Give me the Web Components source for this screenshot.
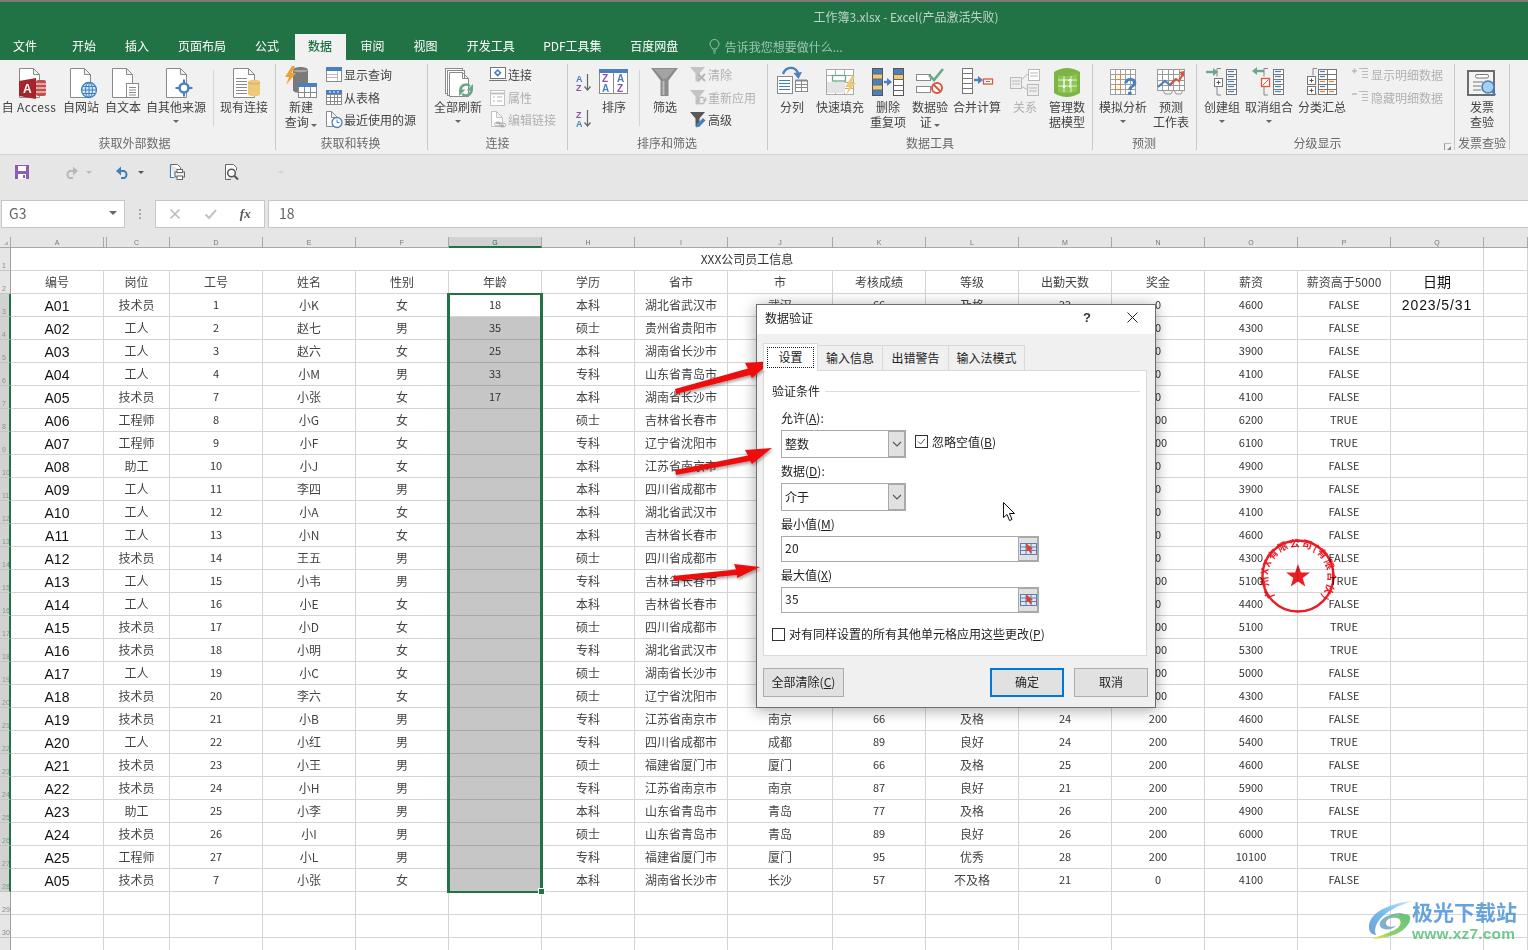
<!DOCTYPE html>
<html lang="zh-CN"><head><meta charset="utf-8"><title>工作簿3.xlsx - Excel</title>
<style>
html,body{margin:0;padding:0;background:#fff}
body{font:12px "Noto Sans CJK SC","Liberation Sans",sans-serif;color:#333;width:1528px;height:950px;overflow:hidden}
</style></head><body>
<x-app>
  <x-titlebar slot="chrome"></x-titlebar>
  <x-ribbon slot="chrome">
    <rb-group w="276" label="获取外部数据" lp="6">
      <rb-big w="58" icon="access" ls=".4">自 Access</rb-big><rb-big w="46" icon="web">自网站</rb-big><rb-big w="38" icon="text">自文本</rb-big><rb-big w="68" icon="other" caret="1">自其他来源</rb-big><rb-sep w="6"></rb-sep><rb-big w="56" icon="conn">现有连接</rb-big>
    </rb-group>
    <rb-group w="152" label="获取和转换" lp="2">
      <rb-big w="50" icon="query" inlinecaret="1" l2="查询">新建</rb-big>
      <rb-col ml="-1"><rb-small icon="showq">显示查询</rb-small><rb-small icon="fromt">从表格</rb-small><rb-small icon="recent">最近使用的源</rb-small></rb-col>
    </rb-group>
    <rb-group w="140" label="连接">
      <rb-big w="60" icon="refresh" caret="1">全部刷新</rb-big>
      <rb-col ml="1"><rb-small icon="link">连接</rb-small><rb-small icon="prop" off="1">属性</rb-small><rb-small icon="edit" off="1">编辑链接</rb-small></rb-col>
    </rb-group>
    <rb-group w="200" label="排序和筛选" lp="1">
      <rb-col w="28"><rb-tall icon="azs"></rb-tall><rb-tall icon="zas"></rb-tall></rb-col>
      <rb-big w="36" icon="sort">排序</rb-big><rb-sep w="14"></rb-sep><rb-big w="38" icon="filter">筛选</rb-big>
      <rb-col ml="5"><rb-small icon="clear" off="1">清除</rb-small><rb-small icon="reapply" off="1">重新应用</rb-small><rb-small icon="adv">高级</rb-small></rb-col>
    </rb-group>
    <rb-group w="325" label="数据工具">
      <rb-big w="48" icon="split">分列</rb-big><rb-big w="48" icon="flash">快速填充</rb-big><rb-big w="48" icon="dedup" l2="重复项">删除</rb-big><rb-big w="36" icon="valid" inlinecaret="1" l2="证">数据验</rb-big><rb-big w="58" icon="merge">合并计算</rb-big><rb-big w="38" icon="rel" off="1">关系</rb-big><rb-big w="46" icon="model" l2="据模型">管理数</rb-big>
    </rb-group>
    <rb-group w="104" label="预测" pad="4" lp="1">
      <rb-big w="52" icon="whatif" caret="1">模拟分析</rb-big><rb-big w="44" icon="forecast" l2="工作表">预测</rb-big>
    </rb-group>
    <rb-group w="258" label="分级显示" launcher="1" lp="16">
      <rb-big w="50" icon="group" caret="1">创建组</rb-big><rb-big w="44" icon="ungroup" caret="1">取消组合</rb-big><rb-big w="62" icon="subtotal">分类汇总</rb-big>
      <rb-col ml="-1"><rb-small icon="showd" off="1">显示明细数据</rb-small><rb-small icon="hided" off="1">隐藏明细数据</rb-small></rb-col>
    </rb-group>
    <rb-group w="55" label="发票查验">
      <rb-big w="54" icon="invoice" l2="查验">发票</rb-big>
    </rb-group>
  </x-ribbon>
  <x-qat slot="chrome"></x-qat>
  <x-formula slot="chrome"></x-formula>
  <x-sheet slot="chrome"></x-sheet>
  <x-dialog slot="over"></x-dialog>
  <x-annotations slot="over"></x-annotations>
  <x-stamp slot="over"></x-stamp>
  <x-watermark slot="over"></x-watermark>
</x-app>
<script>
const CJK='"Noto Sans CJK SC","Liberation Sans",sans-serif';
const G='#8a8a8a',B='#4a80bd',Y='#efc97a',O='#e0863a',R='#d9573a',GR='#6aa88c';
const svg=(w,h,s)=>`<svg xmlns="http://www.w3.org/2000/svg" width="${w}" height="${h}" viewBox="0 0 ${w} ${h}" style="display:block;overflow:visible">${s}</svg>`;
const pg=(x,y,w,h,s=G,f='#fff')=>`<path d="M${x+.5} ${y+.5}h${w-6}l6 6v${h-6}h-${w}z M${x+w-5.5} ${y+.5}v6h6" fill="${f}" stroke="${s}"/>`;
const hl=(x,y,w,n,st,c=G,sw=1)=>{let o='';for(let i=0;i<n;i++)o+=`<path d="M${x} ${y+i*st+.5}h${w}" stroke="${c}" stroke-width="${sw}"/>`;return o};
const grid=(x,y,w,h,c,r,s=G,f='#fff')=>{let o=`<rect x="${x+.5}" y="${y+.5}" width="${w}" height="${h}" fill="${f}" stroke="${s}"/>`;for(let i=1;i<c;i++){const a=Math.round(x+i*w/c)+.5;o+=`<path d="M${a} ${y}v${h}" stroke="${s}"/>`}for(let i=1;i<r;i++){const a=Math.round(y+i*h/r)+.5;o+=`<path d="M${x} ${a}h${w}" stroke="${s}"/>`}return o};
const arrow=(x,y,w,c,dir=1)=>dir>0?`<path d="M${x} ${y}h${w-4}" stroke="${c}" stroke-width="2.4"/><path d="M${x+w-5} ${y-4}l5 4l-5 4z" fill="${c}"/>`:`<path d="M${x+4} ${y}h${w-4}" stroke="${c}" stroke-width="2.4"/><path d="M${x+5} ${y-4}l-5 4l5 4z" fill="${c}"/>`;
const refresh=(cx,cy,r,c)=>`<path d="M${cx-r} ${cy}a${r} ${r} 0 0 1 ${r*1.7} ${-r*.7}" fill="none" stroke="${c}" stroke-width="2.6"/><path d="M${cx+r} ${cy}a${r} ${r} 0 0 1 ${-r*1.7} ${r*.7}" fill="none" stroke="${c}" stroke-width="2.6"/><path d="M${cx+r+1.5} ${cy-r-.5}v${r+1}h${-r-1}z M${cx-r-1.5} ${cy+r+.5}v${-r-1}h${r+1}z" fill="${c}"/>`;
const bolt=(x,y,c)=>`<path d="M${x+7} ${y}L${x} ${y+11}h4L${x+1} ${y+19}L${x+11} ${y+7}h-4.500L${x+10} ${y}z" fill="${c}"/>`;
const funnel=(c,x=0,y=0)=>`<path d="M${x+1} ${y+1}h15l-5.500 6.500v8h-4v-8z" fill="${c}"/>`;
const txt=(x,y,s,c,t,w=400,fam='Liberation Sans')=>`<text x="${x}" y="${y}" font-size="${s}" font-weight="${w}" fill="${c}" font-family="${fam}">${t}</text>`;
const ICONS={
 access:svg(36,33,pg(8,2,20,29)+`<rect x="25" y="14" width="10" height="16" rx="2" fill="#c0504d"/><path d="M25 18h10M25 22h10M25 26h10" stroke="#fff"/><path d="M8 15l17-3v21l-17-3z" fill="#a4262c"/>`+txt(12,27,12,'#fff','A',700)),
 web:svg(36,33,pg(7,2,20,29)+`<circle cx="26" cy="24" r="7.500" fill="#d7e7f6" stroke="#3f7fc1" stroke-width="1.300"/><ellipse cx="26" cy="24" rx="3.500" ry="7.500" fill="none" stroke="#3f7fc1"/><path d="M18.500 24h15M19.500 20.500h13M19.500 27.500h13M26 16.500v15" stroke="#3f7fc1"/>`),
 text:svg(36,33,pg(7,2,20,29)+`<rect x="21.500" y="17.500" width="12" height="14" fill="#fff" stroke="${G}"/>`+hl(24,21,7,4,2.500)),
 other:svg(36,33,pg(8,2,20,29)+`<circle cx="26" cy="22" r="4.500" fill="#fff" stroke="${B}" stroke-width="2.600"/><path d="M26 13.500v4M26 26.500v4M17.500 22h4M30.500 22h4" stroke="${B}" stroke-width="2"/>`),
 conn:svg(36,33,pg(7,2,21,29)+hl(10,12,11,6,3)+`<path d="M22 16c0-3 12-3 12 0v12c0 3-12 3-12 0z" fill="${Y}"/><path d="M22 16c0 2.500 12 2.500 12 0" fill="none" stroke="#d9ad58"/>`),
 query:svg(36,33,`<path d="M10 4c0-4 15-4 15 0v20c0 4-15 4-15 0z" fill="#7a7a7a"/><path d="M10 4c0 3 15 3 15 0" fill="#a8a8a8"/>`+bolt(2,0,'#f0a030')+`<rect x="15.500" y="17.500" width="18" height="14" fill="#fff" stroke="${G}"/><rect x="15" y="17" width="19" height="4" fill="${B}"/><path d="M21.500 21v10M27.500 21v10M16 26.500h18" stroke="${G}"/>`),
 showq:svg(19,17,`<rect x="1.500" y="1.500" width="15" height="14" fill="#fff" stroke="${G}"/><rect x="1" y="1" width="16" height="4" fill="${B}"/><path d="M12.500 5v10M2 8.500h10M2 11.500h10" stroke="#bbb"/>`),
 fromt:svg(19,17,grid(1,1,15,14,4,4)+`<rect x="1" y="1" width="16" height="4" fill="${B}"/><path d="M5 2v2M9 2v2M13 2v2" stroke="#fff"/>`),
 recent:svg(19,17,pg(1,0,11,15)+`<circle cx="12" cy="11.500" r="5" fill="#fff" stroke="${B}" stroke-width="1.300"/><path d="M12 8.500v3h2.500" fill="none" stroke="${B}"/>`),
 refresh:svg(36,33,`<rect x="5.500" y="2.500" width="17" height="25" fill="#fff" stroke="${G}"/><rect x="7.500" y="4.500" width="17" height="25" fill="#fff" stroke="${G}"/>`+pg(9,6,19,24)+refresh(26,24,5.500,GR)),
 link:svg(19,17,`<rect x="1.500" y="1.500" width="15" height="11" fill="#fff" stroke="#777"/><path d="M0 14.500h18" stroke="#777"/><rect x="6" y="4" width="5.500" height="5.500" transform="rotate(45 8.700 6.700)" fill="${B}"/><circle cx="8.700" cy="6.700" r="1.300" fill="#fff"/>`),
 prop:svg(19,17,`<rect x="1.500" y="1.500" width="14" height="15" fill="#fff" stroke="#c2c2c2"/><path d="M1 4.500h15" stroke="#c2c2c2" stroke-width="2"/><path d="M4 8h2M8 8h5M4 12h2M8 12h5" stroke="#b0b0b0"/>`),
 edit:svg(19,17,pg(2,0,11,15,'#c2c2c2')+`<path d="M7 12h4M12 15h3" stroke="#b0b0b0" stroke-width="2"/><ellipse cx="9" cy="13" rx="3.500" ry="2" fill="none" stroke="#b0b0b0"/><ellipse cx="13.500" cy="14" rx="3.500" ry="2" fill="none" stroke="#b0b0b0"/>`),
 azs:svg(18,21,txt(1,10,9,B,'A',700)+txt(1,19,9,'#8a56ad','Z',700)+`<path d="M12.500 2v16M9.500 14.500l3 3.500l3-3.500" fill="none" stroke="#666" stroke-width="1.200"/>`),
 zas:svg(18,21,txt(1,10,9,'#8a56ad','Z',700)+txt(1,19,9,B,'A',700)+`<path d="M12.500 2v16M9.500 14.500l3 3.500l3-3.500" fill="none" stroke="#666" stroke-width="1.200"/>`),
 sort:svg(36,33,`<rect x="3.500" y="3.500" width="28" height="24" fill="#fff" stroke="${G}"/><rect x="3" y="3" width="29" height="4" fill="${B}"/><path d="M17.500 7v20" stroke="${G}"/>`+txt(6,16,10,'#8a56ad','Z',700)+txt(6,26,10,B,'A',700)+txt(21,16,10,B,'A',700)+txt(21,26,10,'#8a56ad','Z',700)),
 filter:svg(36,33,`<path d="M4 2h27L21.500 14.500V30h-8V14.500z" fill="#8c8c8c"/><path d="M7 3h21l-9 10H16z" fill="#a3a3a3"/><path d="M15.500 15v14h2V15z" fill="#bdbdbd"/>`),
 clear:svg(19,17,funnel('#c4c4c4')+`<path d="M9 8l7 7M16 8l-7 7" stroke="#b4b4b4" stroke-width="1.800"/>`),
 reapply:svg(19,17,funnel('#c4c4c4')+refresh(12.500,11.500,3.300,'#bdbdbd').replace(/2\.6/g,'1.500')),
 adv:svg(19,17,funnel('#585858')+`<path d="M7 16.500l1-3.500l6-6l2.500 2.500l-6 6z" fill="#4a80bd"/>`),
 split:svg(36,33,`<rect x="3.500" y="10.500" width="15" height="17" fill="#fff" stroke="${G}"/>`+hl(5,14,11,4,3,'#3f7fc1')+grid(21,14,12,11,2,3)+`<path d="M21 14.500h12" stroke="${G}" stroke-width="2"/><path d="M9 8C12 0 21 0 24 7" fill="none" stroke="${B}" stroke-width="2.400"/><path d="M19.500 7l8.500-1l-3.500 7z" fill="${B}"/>`),
 flash:svg(36,33,grid(4,3,27,25,3,4,'#a9a9a9')+`<rect x="10.500" y="9.500" width="13" height="5.500" fill="#fff" stroke="${GR}" stroke-width="1.300"/><rect x="5" y="16" width="18" height="11" fill="#e4e4e4"/>`+bolt(23,10,Y)),
 dedup:svg(36,33,`<rect x="2.500" y="2.500" width="10" height="27" fill="${B}" stroke="#555"/><path d="M3 8h9v5h-9zM3 19h9v5h-9z" fill="${Y}"/><path d="M2 8h11M2 13h11M2 19h11M2 24h11" stroke="#666"/>`+arrow(14,16,8,B)+`<rect x="23.500" y="2.500" width="10" height="27" fill="#fff" stroke="#555"/><path d="M24 3h9v5h-9z" fill="${B}"/><path d="M24 8h9v5h-9z" fill="${Y}"/><path d="M23 8.500h11M23 13.500h11M23 19.500h11M23 24.500h11" stroke="#666"/>`),
 valid:svg(36,33,`<rect x="4.500" y="8.500" width="14" height="6" fill="#fff" stroke="${G}"/><rect x="4.500" y="20.500" width="14" height="6" fill="#fff" stroke="${G}"/><path d="M17 9l5 5L31 3" fill="none" stroke="${GR}" stroke-width="2.600"/><circle cx="25" cy="22" r="5" fill="#fff" stroke="${R}" stroke-width="2"/><path d="M21.500 18.500l7 7" stroke="${R}" stroke-width="2"/>`),
 merge:svg(36,33,grid(3,2,10,25,1,5,'#777')+arrow(15,14,9,B)+`<rect x="24.500" y="13" width="9" height="5" fill="#fff" stroke="${R}" stroke-width="1.300"/><path d="M27 15.500h4" stroke="${R}"/>`),
 rel:svg(36,33,`<rect x="3.500" y="11.500" width="11" height="11" fill="#eee" stroke="#b9b9b9"/><rect x="21.500" y="3.500" width="11" height="11" fill="#fff" stroke="#b9b9b9"/><rect x="20.500" y="18.500" width="11" height="11" fill="#eee" stroke="#b9b9b9"/><path d="M14 14l8-7M14 20l7 4M5 15h8M5 18h8M23 7h8M23 10h8M22 22h8M22 25h8" stroke="#b9b9b9"/>`),
 model:svg(36,33,`<path d="M5 6q13-8 26 0v21q-13 8-26 0z" fill="#7db544"/><path d="M9 9q9 3 19-1v17q-10 4-19 1z" fill="#8ec654"/><path d="M15 10v16M22 10v16M9 14h19M9 20h19" stroke="#e7f2d8"/><path d="M15 13v9m-2-2l2 2l2-2M21 22v-9m-2 2l2-2l2 2" fill="none" stroke="#fff"/>`),
 whatif:svg(36,33,grid(5,3,25,25,5,5,'#a0a0a0')+`<rect x="10.500" y="8.500" width="5" height="5" fill="#fff" stroke="${O}"/><rect x="10.500" y="18.500" width="5" height="5" fill="#fff" stroke="${O}"/>`+txt(18,29,24,B,'?',700)),
 forecast:svg(36,33,grid(4,3,27,21,5,4,'#9a9a9a')+`<path d="M5 21l7-6l5 4l6-6" fill="none" stroke="${B}" stroke-width="2.200"/><path d="M17 19l6-6l3 2l4-7" fill="none" stroke="${R}" stroke-width="2"/><path d="M26 6l5-1v6z" fill="${R}"/><path d="M10 24l2 4h6l2-4M21 24l2 4h5l2-4" fill="none" stroke="#999"/>`),
 group:svg(36,33,arrow(2,6,12,GR)+`<path d="M17 2.500h-4v8M13 20v9h4" fill="none" stroke="#888"/><rect x="10.500" y="12.500" width="8" height="8" fill="#fff" stroke="#777"/><path d="M12.500 16.500h4M14.500 14.500v4" stroke="#555"/>`+grid(22,3,10,25,1,5,'#777')+hl(24,5,6,5,5,B,1.300)),
 ungroup:svg(36,33,arrow(1,5,12,GR,-1)+`<path d="M17 2.500h-4v8M13 20v9h4" fill="none" stroke="#888"/><rect x="10.500" y="12.500" width="8" height="8" fill="#fff" stroke="${R}" stroke-width="1.300"/><path d="M11.500 19.500l6-6" stroke="${R}"/>`+grid(22,3,10,25,1,5,'#777')+hl(24,5,6,5,5,B,1.300)),
 subtotal:svg(36,33,`<path d="M13 2.500h-4v7M9 21v7h4" fill="none" stroke="#888"/><rect x="3.500" y="10.500" width="8" height="8" fill="#fff" stroke="#777"/><rect x="3.500" y="20.500" width="8" height="8" fill="#fff" stroke="#777"/><path d="M5.500 14.500h4M7.500 12.500v4M5.500 24.500h4M7.500 22.500v4" stroke="#555"/>`+grid(14,3,18,25,2,5,'#777')+hl(16,5,5,1,5,B,1.300)+hl(16,10,5,1,5,B,1.300)+hl(16,15,5,1,5,O,1.300)+hl(25,15,5,1,5,O,1.300)+hl(16,20,5,1,5,B,1.300)+hl(16,25,5,1,5,O,1.300)+hl(25,25,5,1,5,O,1.300)),
 showd:svg(19,17,`<path d="M0 5h5M2.500 2.500v5" stroke="#bbb" stroke-width="1.500"/>`+hl(7,2,9,1,3,'#bbb')+hl(10,5,6,3,3,'#bbb')),
 hided:svg(19,17,`<path d="M0 5h5" stroke="#bbb" stroke-width="1.500"/>`+hl(7,2,9,1,3,'#bbb')+hl(10,5,6,3,3,'#bbb')),
 invoice:svg(36,33,`<rect x="4" y="5" width="26" height="24" fill="#f4f4f4" stroke="#6c6c6c" stroke-width="2"/><path d="M4 5v24" stroke="#6c6c6c" stroke-width="2" stroke-dasharray="2 2"/><rect x="11.500" y="8.500" width="13" height="3.500" rx="1.500" fill="#fff" stroke="#777"/><path d="M9 16h10M9 20h8M9 24h8" stroke="#777"/><circle cx="24" cy="21" r="6" fill="#a6d0f2" stroke="#4a80bd" stroke-width="1.600"/><path d="M28 25.500l3.500 3.500" stroke="#4a80bd" stroke-width="2"/>`),
 save:svg(16,16,`<path d="M1 1h14v14H1z" fill="#8e5cb5"/><rect x="4" y="2" width="8" height="5" fill="#fff"/><rect x="4" y="10" width="8" height="5" fill="#fff"/><rect x="9" y="11" width="2" height="3" fill="#8e5cb5"/>`),
 redo:svg(16,14,`<path d="M14 6H6.500A4 4 0 0 0 6.500 13H10" fill="none" stroke="#b8b8b8" stroke-width="2"/><path d="M10 1.500l5 4.500l-5 4.500z" fill="#b8b8b8"/>`),
 undo:svg(16,14,`<path d="M2 6h7.500a4 4 0 0 1 0 7H6" fill="none" stroke="#3f7fc1" stroke-width="2"/><path d="M6 1.500l-5 4.500l5 4.500z" fill="#3f7fc1"/>`),
 print:svg(18,18,`<path d="M2.500 1.500h7l3 3V7" fill="#fff" stroke="#666"/><path d="M2.500 1.500v13H6" fill="#fff" stroke="#3f7fc1" stroke-width="1.200"/><rect x="7" y="9" width="9.500" height="5" fill="#eee" stroke="#666"/><rect x="9" y="6.500" width="5.500" height="3" fill="#fff" stroke="#666"/><rect x="9" y="13" width="5.500" height="3.500" fill="#fff" stroke="#666"/>`),
 preview:svg(18,18,`<path d="M2.500 16.500v-15h8l3 3v3" fill="#fff" stroke="#666"/><path d="M2.500 16.500H8" stroke="#666"/><circle cx="8.500" cy="10" r="3.800" fill="#fff" stroke="#555" stroke-width="1.500"/><path d="M11.500 13l3.500 3.500" stroke="#555" stroke-width="2"/>`),
};
const caret=(c='#666',w=7)=>`<span style="display:inline-block;width:0;height:0;border-left:${w/2}px solid transparent;border-right:${w/2}px solid transparent;border-top:${w/2}px solid ${c}"></span>`;
function el(name,css,html,init){customElements.define(name,class extends HTMLElement{connectedCallback(){if(this.shadowRoot)return;const r=this.attachShadow({mode:'open'});r.innerHTML=`<style>${css}</style>`+(typeof html==='function'?html(this):html);if(init)init(this,r)}})}

el('x-app',`:host{display:block;position:relative;width:1528px;height:950px;overflow:hidden;background:#e6e6e6}`,`<slot name="chrome"></slot><slot name="over"></slot>`);

el('x-titlebar',`:host{display:block;background:#217346;height:60px;border-top:2px solid #7b7b7b;box-sizing:border-box;font:12px ${CJK};color:#fff}
.t{height:32px;box-sizing:border-box;padding:0 0 4px 284px;display:flex;justify-content:center;align-items:center;color:#bcd5c7}
.tabs{display:flex;height:26px;align-items:stretch}
.tab{padding:0 14.5px 4px;display:flex;align-items:center;white-space:nowrap;color:#fff}
.tab.first{padding:0 20.5px 4px 13px}.tab.on{background:#f1f1f1;color:#217346;padding:0 13.5px 4px;margin:0 .5px 0 1px;font-weight:500}
.tab.wide{padding:0 14px 4px}
.s{display:flex;align-items:center;margin-left:16px;padding-bottom:2px;color:#9cc6ae;gap:5px}
`,`<div class="t">工作簿3.xlsx - Excel(产品激活失败)</div><div class="tabs"><div class="tab first">文件</div><div class="tab">开始</div><div class="tab">插入</div><div class="tab">页面布局</div><div class="tab">公式</div><div class="tab on">数据</div><div class="tab">审阅</div><div class="tab">视图</div><div class="tab">开发工具</div><div class="tab wide">PDF工具集</div><div class="tab">百度网盘</div><div class="s"><svg width="11" height="15" viewBox="0 0 11 15"><path d="M3.500 10C3 8 1 7.500 1 5a4.500 4.500 0 0 1 9 0c0 2.500-2 3-2.500 5zM4 12h3M4.500 14h2" fill="none" stroke="#9cc6ae"/></svg>告诉我您想要做什么...</div></div>`);

el('x-ribbon',`:host{display:flex;height:95px;box-sizing:border-box;background:#f1f1f1;border-bottom:1px solid #d2d2d2;font:12px ${CJK};color:#444}`,`<slot></slot>`);
el('rb-group',`:host{display:flex;flex-direction:column;box-sizing:border-box;height:86px;margin-top:4px;border-right:1px solid #c9c9c9;position:relative;flex:none}
.i{display:flex;height:72px}.l{height:14px;line-height:14px;text-align:center;color:#6a6a6a;white-space:nowrap}
.e{position:absolute;right:3px;bottom:0;width:7px;height:7px;border-left:1px solid #999;border-top:1px solid #bbb;box-sizing:border-box}
.e:after{content:"";position:absolute;right:0;bottom:0;border-right:4px solid #888;border-top:4px solid transparent}`,
 h=>`<div class="i" style="padding-left:${h.getAttribute('pad')||0}px"><slot></slot></div><div class="l" style="padding-right:${h.getAttribute('lp')||0}px">${h.getAttribute('label')}</div>${h.hasAttribute('launcher')?'<div class="e"></div>':''}`,
 h=>{h.style.width=h.getAttribute('w')+'px'});
el('rb-big',`:host{display:flex;flex-direction:column;align-items:center;padding-top:2px;flex:none;white-space:nowrap;color:#444}
:host([off]){color:#b1b1b1}.ic{height:33px;margin-bottom:0}.ln{line-height:15px;height:15px}.c{height:15px;display:flex;align-items:center;justify-content:center}`,
 h=>{const l2=h.getAttribute('l2');return `<div class="ic">${ICONS[h.getAttribute('icon')]}</div><div class="ln"><slot></slot></div>`+(l2?`<div class="ln">${l2}${h.hasAttribute('inlinecaret')?' '+caret():''}</div>`:'')+(h.hasAttribute('caret')?`<div class="c">${caret()}</div>`:'')},
 h=>{h.style.width=h.getAttribute('w')+'px';if(h.getAttribute('ls'))h.style.letterSpacing=h.getAttribute('ls')+'px'});
el('rb-sep',`:host{display:flex;justify-content:center;flex:none;padding-top:6px}i{display:block;width:1px;height:56px;background:#d4d4d4}`,`<i></i>`,h=>{h.style.width=h.getAttribute('w')+'px'});
el('rb-col',`:host{display:flex;flex-direction:column;flex:none}`,`<slot></slot>`,h=>{if(h.getAttribute('w'))h.style.width=h.getAttribute('w')+'px';if(h.getAttribute('ml'))h.style.marginLeft=h.getAttribute('ml')+'px'});
el('rb-small',`:host{display:flex;align-items:center;height:22.700px;box-sizing:border-box;padding-bottom:2px;white-space:nowrap;color:#444;gap:0}:host([off]){color:#b1b1b1}.ic{width:19px;display:flex}`,h=>`<div class="ic">${ICONS[h.getAttribute('icon')]}</div><slot></slot>`);
el('rb-tall',`:host{display:flex;height:38px;padding-left:7px;align-items:center}`,h=>`${ICONS[h.getAttribute('icon')]}`);

el('x-qat',`:host{display:flex;align-items:center;height:45px;box-sizing:border-box;background:#e6e6e6;padding-bottom:11px}
span.w{display:flex;align-items:center;justify-content:flex-start;flex:none}span.k{margin-left:7px;display:flex}`,
 `<span class="w" style="width:63px;padding-left:14px;box-sizing:border-box">${ICONS.save}</span><span class="w" style="width:52px">${ICONS.redo}<span class="k">${caret('#bbb')}</span></span><span class="w" style="width:53px">${ICONS.undo}<span class="k">${caret('#555')}</span></span><span class="w" style="width:55px">${ICONS.print}</span><span class="w" style="width:55px">${ICONS.preview}</span><span class="w">${caret('#d4d4d4')}</span>`);

el('x-formula',`:host{display:flex;height:28px;box-sizing:border-box;background:#e6e6e6;padding-left:1px;font:14px ${CJK};color:#666}
.box{background:#fff;border:1px solid #c6c6c6;box-sizing:border-box;height:28px;display:flex;align-items:center;padding-bottom:2px}
.n{width:124px;padding:0 7px 2px;justify-content:space-between}.dots{width:30px;display:flex;flex-direction:column;align-items:center;justify-content:center;gap:2px}.dots i{width:2px;height:2px;background:#aaa}
.fx{width:110px;justify-content:space-around;padding:0 2px 1px;margin-right:3px}.v{flex:1;padding-left:10px;border-right:0}
.fxt{font:italic 700 13px "Liberation Serif",serif;color:#555}`,
 `<div class="box n">G3${caret('#666',9)}</div><div class="dots"><i></i><i></i><i></i></div><div class="box fx"><svg width="12" height="12" viewBox="0 0 12 12"><path d="M1.500 1.500l9 9M10.500 1.500l-9 9" stroke="#bbb" stroke-width="1.600"/></svg><svg width="13" height="12" viewBox="0 0 13 12"><path d="M1.500 6.500l3.500 3.500l7-8" fill="none" stroke="#c4c4c4" stroke-width="2"/></svg><span class="fxt">fx</span></div><div class="box v">18</div>`);

/* sheet */
const COLS=['A','C','D','E','F','G','H','I','J','K','L','M','N','O','P','Q',''];
const W=[93,66,93,93,93,93,93,93,105,93,93,93,93,93,93,93,44];
const HEAD=['编号','岗位','工号','姓名','性别','年龄','学历','省市','市','考核成绩','等级','出勤天数','奖金','薪资','薪资高于5000','日期',''];
const N0='0',N2='200';
const DATA=[
['A01','技术员',1,'小K','女',18,'本科','湖北省武汉市','武汉',66,'及格',22,N0,4600,'FALSE','2023/5/31'],
['A02','工人',2,'赵七','男',35,'硕士','贵州省贵阳市','','','','',N0,4300,'FALSE'],
['A03','工人',3,'赵六','女',25,'本科','湖南省长沙市','','','','',N0,3900,'FALSE'],
['A04','工人',4,'小M','男',33,'专科','山东省青岛市','','','','',N0,4100,'FALSE'],
['A05','技术员',7,'小张','女',17,'本科','湖南省长沙市','','','','',N0,4100,'FALSE'],
['A06','工程师',8,'小G','女','','硕士','吉林省长春市','','','','',N2,6200,'TRUE'],
['A07','工程师',9,'小F','女','','专科','辽宁省沈阳市','','','','',N2,6100,'TRUE'],
['A08','助工',10,'小J','女','','本科','江苏省南京市','','','','',N0,4900,'FALSE'],
['A09','工人',11,'李四','男','','本科','四川省成都市','','','','',N0,3900,'FALSE'],
['A10','工人',12,'小A','女','','本科','湖北省武汉市','','','','',N0,4100,'FALSE'],
['A11','工人',13,'小N','女','','本科','吉林省长春市','','','','',N0,4600,'FALSE'],
['A12','技术员',14,'王五','男','','硕士','四川省成都市','','','','',N0,4300,'FALSE'],
['A13','工人',15,'小韦','男','','专科','吉林省长春市','','','','',N2,5100,'TRUE'],
['A14','工人',16,'小E','女','','本科','吉林省长春市','','','','',N0,4400,'FALSE'],
['A15','技术员',17,'小D','女','','硕士','四川省成都市','','','','',N2,5100,'TRUE'],
['A16','技术员',18,'小明','女','','专科','湖北省武汉市','','','','',N2,5300,'TRUE'],
['A17','工人',19,'小C','女','','硕士','湖南省长沙市','','','','',N2,5000,'FALSE'],
['A18','技术员',20,'李六','女','','硕士','辽宁省沈阳市','','','','',N2,4300,'FALSE'],
['A19','技术员',21,'小B','男','','专科','江苏省南京市','南京',66,'及格',24,N2,4600,'FALSE'],
['A20','工人',22,'小红','男','','专科','四川省成都市','成都',89,'良好',24,N2,5400,'TRUE'],
['A21','技术员',23,'小王','男','','硕士','福建省厦门市','厦门',66,'及格',25,N2,4600,'FALSE'],
['A22','技术员',24,'小H','男','','专科','江苏省南京市','南京',87,'良好',21,N2,5900,'TRUE'],
['A23','助工',25,'小李','男','','本科','山东省青岛市','青岛',77,'及格',26,N2,4900,'FALSE'],
['A24','技术员',26,'小I','男','','硕士','山东省青岛市','青岛',89,'良好',26,N2,6000,'TRUE'],
['A25','工程师',27,'小L','男','','专科','福建省厦门市','厦门',95,'优秀',28,N2,10100,'TRUE'],
['A05','技术员',7,'小张','女','','本科','湖南省长沙市','长沙',57,'不及格',21,N0,4100,'FALSE'],
];
function buildSheet(){
 let h=`<div class="ch corner"></div>`;
 COLS.forEach((c,i)=>{h+=`<div class="ch${c==='G'?' on':''}${c==='C'?' hid':''}">${c}</div>`});
 const rh=(n)=>`<div class="rh${n>=3&&n<=28?' on':''}">${n<31?n:''}</div>`;
 h+=rh(1)+`<div class="c t" style="grid-column:span 16">XXX公司员工信息</div><div class="c"></div>`;
 h+=rh(2);HEAD.forEach((t,i)=>{h+=`<div class="c ${i==15?'big':''}">${t}</div>`});
 DATA.forEach((r,ri)=>{h+=rh(ri+3);for(let i=0;i<17;i++){let v=r[i]===undefined?'':r[i];let cl='c';if(i==0)cl+=' a';else if(typeof v==='number'||v==='FALSE'||v==='TRUE'||v===N0||v===N2)cl+=' n';if(i==15&&v)cl+=' d';if(i==5&&ri>0)cl+=' g';if(i==5)cl+=' n';h+=`<div class="${cl}">${v}</div>`}});
 for(let n=29;n<=31;n++){h+=rh(n);for(let i=0;i<17;i++)h+=`<div class="c"></div>`}
 return `<div class="g">${h}</div><div class="sel"><i></i></div>`;
}
el('x-sheet',`:host{display:block;position:relative;height:713px;margin-top:9px;overflow:hidden;background:#fff;font:12px ${CJK};color:#444}
.g{display:grid;grid-template-columns:11px ${W.map(x=>x+'px').join(' ')};grid-template-rows:11px repeat(31,23px)}
.ch{background:#e6e6e6;border-right:1px solid #a8a8a8;border-bottom:1px solid #a8a8a8;box-sizing:border-box;font:7px/11px "Liberation Sans",sans-serif;color:#777;text-align:center;overflow:hidden;position:relative}
.ch.on{background:#d2d2d2;color:#217346;border-bottom:2px solid #217346}
.ch.hid{box-shadow:inset 2px 0 #e6e6e6,inset 3px 0 #a8a8a8}
.corner:after{content:"";position:absolute;right:2px;bottom:2px;border-right:4px solid #b5b5b5;border-top:4px solid transparent}
.rh{background:#e6e6e6;border-right:1px solid #9e9e9e;border-bottom:1px solid #c4c4c4;box-sizing:border-box;font:7px/8px "Liberation Sans",sans-serif;color:#8a8a8a;display:flex;align-items:flex-end;padding-left:2px;overflow:hidden;white-space:nowrap}
.rh.on{background:#d2d2d2;border-right:2px solid #217346;color:#7e9c8c}
.c{border-right:1px solid #d4d4d4;border-bottom:1px solid #d4d4d4;box-sizing:border-box;display:flex;align-items:center;justify-content:center;white-space:nowrap;overflow:hidden;background:#fff;padding-bottom:2px}
.c.n{font-size:11px;color:#333}
.c.a{font:14px "Liberation Sans",sans-serif;color:#111;padding:2px 0 0}
.c.t{color:#333;font-size:12px}
.c.big{font-size:14px;color:#111}
.c.d{font:14px "Liberation Sans",sans-serif;letter-spacing:.9px;color:#111;padding:0}
.c.g{background:#c6c6c6;border-bottom-color:#a8a8a8;border-right-color:#c6c6c6}
.sel{position:absolute;left:447px;top:56px;width:96px;height:600px;box-sizing:border-box;border:solid #217346;border-width:2px 3px;pointer-events:none}
.sel i{position:absolute;right:-5px;bottom:-4px;width:5px;height:5px;background:#217346;border:1px solid #fff}`,buildSheet);

/* dialog */
const sel=(t)=>`<div class="sel"><span>${t}</span><b><svg width="10" height="6" viewBox="0 0 10 6"><path d="M1 1l4 4l4-4" fill="none" stroke="#555" stroke-width="1.100"/></svg></b></div>`;
const refb=`<b><svg width="17" height="14" viewBox="0 0 17 14"><rect x=".5" y="1.500" width="16" height="11" fill="#dfe8f4" stroke="#5a7fb0"/><path d="M1 5h15M1 8.500h15M6 2v10M11 2v10" stroke="#5a7fb0"/><path d="M6 1l7 6l-2.500 .5l1.500 3l-2 .5l-1.500-3l-2 1.500z" fill="#d8432a"/></svg></b>`;
el('x-dialog',`:host{position:absolute;left:756px;top:304px;width:400px;height:404px;box-sizing:border-box;border:1px solid #6e6e6e;background:#f0f0f0;box-shadow:0 2px 14px rgba(0,0,0,.35);display:flex;flex-direction:column;font:12px ${CJK};color:#222}
.title{height:29px;box-sizing:border-box;background:#fff;display:flex;align-items:center;padding:0 17px 4px 8px;flex:none}
.title .tt{flex:1}.q{margin-right:36px;font:700 13px "Liberation Sans",sans-serif;color:#333}
.b{flex:1;padding:9px 7px 0 6px;display:flex;flex-direction:column}
.tabs{display:flex;height:27px;align-items:flex-end;position:relative;z-index:1}
.tab{height:25px;box-sizing:border-box;border:1px solid #d9d9d9;border-bottom:0;border-left:0;display:flex;align-items:center;justify-content:center;background:#f0f0f0;padding-bottom:2px}
.tab.on{height:28px;width:55px;background:#fff;border-left:1px solid #d9d9d9;margin-bottom:-1px;padding:3px;align-items:stretch}
.tab.on span{flex:1;border:1px dotted #222;display:flex;align-items:center;justify-content:center;padding-bottom:2px}
.panel{height:286px;box-sizing:border-box;margin-right:1px;background:#fff;border:1px solid #d9d9d9;padding:13px 6px 0 8px}
.fs{display:flex;align-items:center;gap:5px;line-height:14px}.fs i{flex:1;height:1px;background:#dcdcdc}
.in{padding-left:9px}.lb{line-height:14px;margin-top:6px}.lb.first{margin-top:13px}
.sel{margin-top:5px;width:125px;height:28px;box-sizing:border-box;border:1px solid #a9a9a9;display:flex;background:#fff}
.sel span{flex:1;padding:0 0 2px 3px;display:flex;align-items:center}
.sel b{width:18px;box-sizing:border-box;background:#e1e1e1;border:2px solid #a9a9a9;border-left-width:1px;margin:-1px;display:flex;align-items:center;justify-content:center}
.row{display:flex;align-items:flex-start;gap:9px}.ck{display:flex;align-items:center;gap:4px;margin-top:8px}
.box{width:13px;height:13px;box-sizing:border-box;border:1px solid #333;background:#fff;display:block;flex:none}
.inp{margin-top:5px;width:258px;height:26px;box-sizing:border-box;border:1px solid #a9a9a9;display:flex;background:#fff}
.inp span{flex:1;padding:0 0 3px 3px;display:flex;align-items:center;font-size:12px;letter-spacing:.3px}
.inp b{width:21px;box-sizing:border-box;background:#e1e1e1;margin:-1px;border:2px solid #a9a9a9;border-left-width:1px;display:flex;align-items:center;justify-content:center}
.ap{margin:14px 0 0;display:flex;align-items:center;gap:4px;line-height:14px}
.foot{display:flex;justify-content:space-between;margin-top:12px}
.btn{height:29px;box-sizing:border-box;border:1px solid #adadad;background:#e1e1e1;display:flex;align-items:center;justify-content:center;padding-bottom:2px}
.r{display:flex;gap:10px}.btn.m{width:74px}.btn.p{border:2px solid #0078d7}.btn.l{width:81px}u{text-underline-offset:1px}`,
 `<div class="title"><span class="tt">数据验证</span><span class="q">?</span><svg width="11" height="11" viewBox="0 0 11 11"><path d="M.5 .5l10 10M10.500 .5l-10 10" stroke="#222"/></svg></div>
 <div class="b"><div class="tabs"><div class="tab on"><span>设置</span></div><div class="tab" style="width:65px">输入信息</div><div class="tab" style="width:66px">出错警告</div><div class="tab" style="width:76px">输入法模式</div></div>
 <div class="panel"><div class="fs">验证条件<i></i></div><div class="in">
 <div class="lb first">允许(<u>A</u>):</div><div class="row">${sel('整数')}<label class="ck"><svg class="box" viewBox="0 0 13 13"><path d="M2.500 6.500l3 3l5-6" fill="none" stroke="#333"/></svg><span>忽略空值(<u>B</u>)</span></label></div>
 <div class="lb">数据(<u>D</u>):</div>${sel('介于')}
 <div class="lb">最小值(<u>M</u>)</div><div class="inp"><span>20</span>${refb}</div>
 <div class="lb">最大值(<u>X</u>)</div><div class="inp"><span>35</span>${refb}</div></div>
 <div class="ap"><i class="box"></i><span>对有同样设置的所有其他单元格应用这些更改(<u>P</u>)</span></div></div>
 <div class="foot"><div class="btn l">全部清除(<u>C</u>)</div><div class="r"><div class="btn m p">确定</div><div class="btn m">取消</div></div></div></div>`);

el('x-annotations',`:host{position:absolute;left:0;top:0;width:1528px;height:950px;pointer-events:none}svg{display:block}`,
 `<svg width="1528" height="950" viewBox="0 0 1528 950"><defs><filter id="s" x="-20%" y="-50%" width="140%" height="200%"><feDropShadow dx="1" dy="2" stdDeviation="1.500" flood-color="#000" flood-opacity=".35"/></filter></defs>
 <g fill="#ee1111" filter="url(#s)"><polygon points="772,361 745,363 748,368.500 675,389 676,394 750,375 752,378"/><polygon points="772,448 745,450 748,455.500 675,470 676,475 750,461 752,464"/><polygon points="760,567 734,564 736,569.500 673,576 674,581 737,575 737,578"/></g>
 <path d="M1003.500 502.500v15l3.500-3l2.500 6l2.500-1l-2.500-6h5z" fill="#fff" stroke="#111"/></svg>`);

el('x-stamp',`:host{position:absolute;left:1258px;top:536px;width:80px;height:80px;mix-blend-mode:multiply}svg{display:block}`,
 `<svg width="80" height="80" viewBox="0 0 80 80"><circle cx="40" cy="40" r="35.500" fill="none" stroke="#ec1c24" stroke-width="2.400"/><path id="a" d="M17 60A30 30 0 1 1 63 60" fill="none"/><text fill="#ec1c24" font-size="10" font-weight="700" font-family="Noto Sans CJK SC,sans-serif"><textPath href="#a" textLength="136" lengthAdjust="spacing">广州XX有限公司(有限合伙)</textPath></text><polygon fill="#ec1c24" points="40,28 42.900,36.500 51.900,36.500 44.700,41.900 47.300,50.500 40,45.400 32.700,50.500 35.300,41.900 28.100,36.500 37.100,36.500"/></svg>`);

el('x-watermark',`:host{position:absolute;left:1366px;top:898px;width:160px;height:50px;display:flex;opacity:.85}
svg{flex:none;display:block}.t{margin-left:-2px;display:flex;flex-direction:column}.a{font:700 21px/27px ${CJK};color:#4d94d8;white-space:nowrap}.b{font:700 15.500px/18px "Liberation Sans",sans-serif;color:#58c07c;letter-spacing:.2px;white-space:nowrap}`,
 `<svg width="48" height="44" viewBox="0 0 48 44"><defs><linearGradient id="g" x1="1" y1="0" x2="0" y2="1"><stop offset="0" stop-color="#4bb86a"/><stop offset=".65" stop-color="#7ec850"/><stop offset="1" stop-color="#f2e040"/></linearGradient><linearGradient id="h" x1="1" y1="0" x2="0" y2="1"><stop offset="0" stop-color="#bfe6fa"/><stop offset=".5" stop-color="#5cb4ee"/><stop offset="1" stop-color="#5a8fd0"/></linearGradient></defs>
 <path d="M47 3C25 5 2 14 3 30c.5 5 4 7 7 7C6 27 16 12 47 3z" fill="url(#h)"/><path d="M39 15C26 14 12 20 14 28c2 5 12 4 16 0c-6 2-11 0-10-4c2-5 11-8 19-9z" fill="#6f9fc6"/><path d="M44 18c2 9-10 22-38 23c13-6 32-9 28-19c-2-4-12-2-14 0c6-6 20-8 24-4z" fill="url(#g)"/></svg>
 <div class="t"><div class="a">极光下载站</div><div class="b">www.xz7.com</div></div>`);
</script></body></html>
